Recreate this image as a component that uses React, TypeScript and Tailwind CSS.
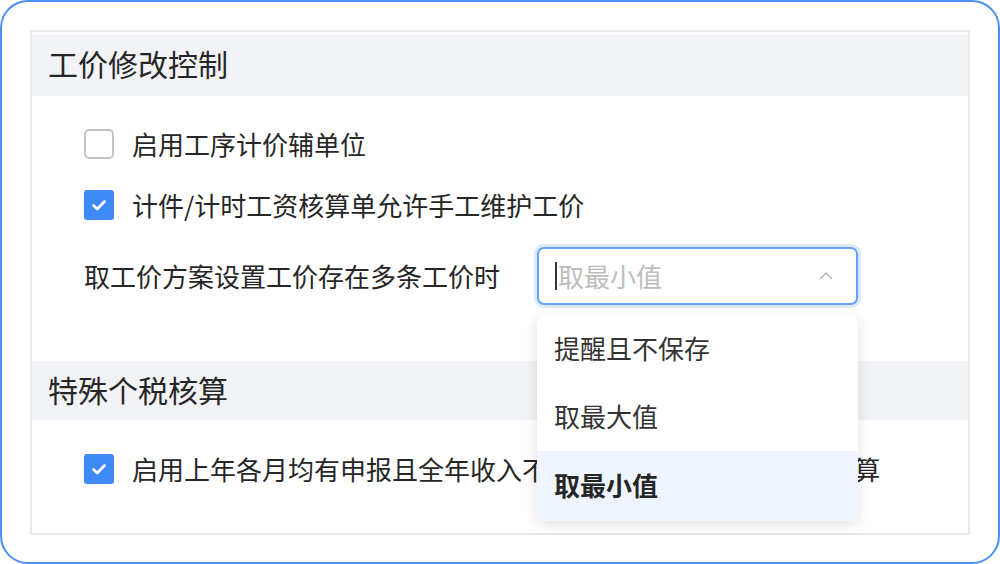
import React from "react";

const font = { fontFamily: '"Noto Sans CJK SC", "Noto Sans", sans-serif' };

function Check({ checked }: { checked: boolean }) {
  if (checked) {
    return (
      <div className="w-[30px] h-[30px] rounded-[3px] bg-[#3e8bf7] flex items-center justify-center shrink-0">
        <svg width="18" height="18" viewBox="0 0 18 18">
          <path d="M3.5 9.5 L7.3 13 L14.5 5.5" fill="none" stroke="#fff" strokeWidth="2.6" strokeLinecap="round" strokeLinejoin="round" />
        </svg>
      </div>
    );
  }
  return <div className="w-[30px] h-[30px] rounded-[5px] border-2 border-[#c4c4c4] bg-white shrink-0" />;
}

export default function App() {
  return (
    <div className="w-[1000px] h-[564px] bg-white" style={font}>
      <div className="w-[1000px] h-[564px] rounded-[28px] border-2 border-[#4d8ff7] pt-[28px] pl-[28px]">
        <div className="w-[940px] h-[505px] border-2 border-[#e8e8e8] pt-[3px] text-[#262626]">
          <div className="h-[61px] bg-[#f2f3f7] flex items-center pl-[16px] pb-[5px] text-[30px] leading-none">工价修改控制</div>
          <div className="pl-[52px] pt-[33px] h-[265px] text-[26px] leading-none">
            <div className="flex items-center gap-[18px] h-[30px]">
              <Check checked={false} />
              <span>启用工序计价辅单位</span>
            </div>
            <div className="flex items-center gap-[18px] h-[30px] mt-[31px]">
              <Check checked={true} />
              <span>计件/计时工资核算单允许手工维护工价</span>
            </div>
            <div className="flex items-center h-[58px] mt-[27px]">
              <span className="w-[453px]">取工价方案设置工价存在多条工价时</span>
              <div className="relative">
                <div className="w-[321px] h-[58px] rounded-[7px] border-2 border-[#67a2f8] shadow-[0_0_0_3px_#dbe9fd] flex items-center pl-[16px] pr-[22px]">
                  <span className="w-[2px] h-[28px] bg-[#333] mr-[1px]" />
                  <span className="text-[#bdbdbd] flex-1">取最小值</span>
                  <svg width="16" height="10" viewBox="0 0 16 10">
                    <path d="M2 8 L8 2 L14 8" fill="none" stroke="#b8b8b8" strokeWidth="1.5" />
                  </svg>
                </div>
                <div className="absolute left-0 top-[68px] w-[321px] h-[206px] bg-white rounded-[8px] shadow-[0_4px_14px_rgba(0,0,0,0.12)] overflow-hidden z-10 text-[#333]">
                  <div className="h-[68px] flex items-center pl-[17px] pb-[2px]">提醒且不保存</div>
                  <div className="h-[68px] flex items-center pl-[17px] pb-[2px]">取最大值</div>
                  <div className="h-[70px] flex items-center pl-[17px] pb-[2px] bg-[#eef5fe] font-bold text-[#262626]">取最小值</div>
                </div>
              </div>
            </div>
          </div>
          <div className="h-[59px] bg-[#f2f3f7] flex items-center pl-[16px] pb-[4px] text-[30px] leading-none">特殊个税核算</div>
          <div className="pl-[52px] pt-[34px] text-[26px] leading-none">
            <div className="flex items-center gap-[18px] h-[30px]">
              <Check checked={true} />
              <span className="whitespace-nowrap">启用上年各月均有申报且全年收入不超过 6万元员工预扣预缴核算</span>
            </div>
          </div>
        </div>
      </div>
    </div>
  );
}
